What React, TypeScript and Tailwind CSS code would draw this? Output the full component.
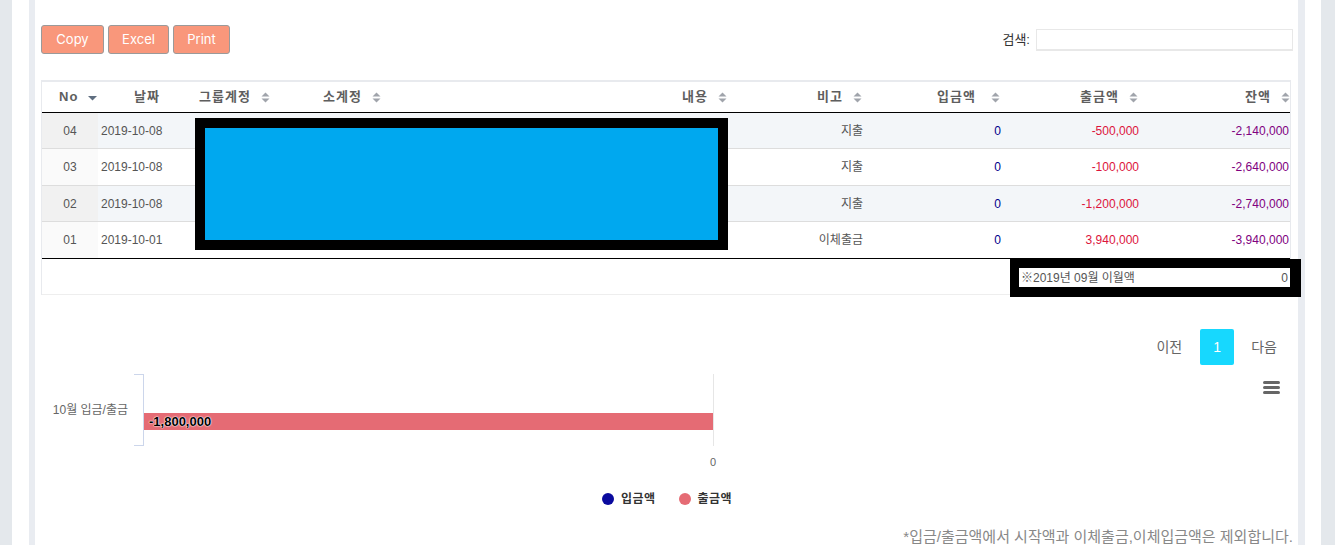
import React from 'react';

const cols = 'grid grid-cols-[56px_98px_124px_181px_230px_135px_138px_138px_150px]';

function SortIcon() {
  return (
    <svg width="9" height="11" viewBox="0 0 9 11" className="shrink-0">
      <path d="M4.5 0.5 L8.5 4.5 H0.5 Z" fill="#a0a4ab" />
      <path d="M4.5 10.5 L8.5 6.5 H0.5 Z" fill="#a0a4ab" />
    </svg>
  );
}

function SortDesc() {
  return (
    <svg width="9" height="5" viewBox="0 0 9 5" className="shrink-0 mt-[3px]">
      <path d="M0 0 H9 L4.5 4.5 Z" fill="#5f6e80" />
    </svg>
  );
}

const rows = [
  { no: '04', date: '2019-10-08', memo: '지출', inAmt: '0', out: '-500,000', bal: '-2,140,000', h: 'h-[36px]' },
  { no: '03', date: '2019-10-08', memo: '지출', inAmt: '0', out: '-100,000', bal: '-2,640,000', h: 'h-[37px]' },
  { no: '02', date: '2019-10-08', memo: '지출', inAmt: '0', out: '-1,200,000', bal: '-2,740,000', h: 'h-[36px]' },
  { no: '01', date: '2019-10-01', memo: '이체출금', inAmt: '0', out: '3,940,000', bal: '-3,940,000', h: 'h-[36px]' },
];

export default function App() {
  return (
    <div className="w-[1335px] h-[545px] overflow-hidden bg-[#e4e8ec] pl-[12px] pr-[14px] font-['Liberation_Sans','Noto_Sans_CJK_KR',sans-serif] text-[#555]">
      <div className="h-full bg-white pl-[17px] pr-[16px]">
        <div className="h-full bg-[#e9ecf1] pl-[6px] pr-[7px]">
          <div className="h-full bg-white pl-[6px] pr-[7px] pt-[25px]">
            {/* toolbar */}
            <div className="flex items-start justify-between">
              <div className="flex gap-[4px]">
                {[
                  ['Copy', 'w-[63px]'],
                  ['Excel', 'w-[61px]'],
                  ['Print', 'w-[57px]'],
                ].map(([t, w]) => (
                  <button
                    key={t}
                    className={`${w} h-[29px] rounded-[3px] border border-[#9a9a9a] bg-[#f9977b] text-white text-[13px] font-['Inter',sans-serif]`}
                  >
                    {t}
                  </button>
                ))}
              </div>
              <div className="flex items-center gap-[6px] mt-[4px] mr-[-2px]">
                <span className="text-[13px] text-[#333]">검색:</span>
                <input className="w-[257px] h-[22px] border border-[#e8e8e8] border-b-2 outline-none" />
              </div>
            </div>

            {/* table */}
            <div className="relative mt-[26px] border-t-2 border-x border-[#e8eaee]">
              <div className={`${cols} h-[31px] border-b border-black text-[13px] font-bold text-[#5e5e5e] tracking-[1px]`}>
                <div className="flex items-center pl-[17px] gap-[10px]">
                  <span>No</span>
                  <SortDesc />
                </div>
                <div className="flex items-center justify-center">날짜</div>
                <div className="flex items-center pl-[3px] gap-[10px]">
                  <span>그룹계정</span>
                  <SortIcon />
                </div>
                <div className="flex items-center pl-[3px] gap-[10px]">
                  <span>소계정</span>
                  <SortIcon />
                </div>
                <div className="flex items-center justify-end pr-[4px] gap-[10px]">
                  <span>내용</span>
                  <SortIcon />
                </div>
                <div className="flex items-center justify-end pr-[4px] gap-[10px]">
                  <span>비고</span>
                  <SortIcon />
                </div>
                <div className="flex items-center justify-end pr-[4px] gap-[15px]">
                  <span>입금액</span>
                  <SortIcon />
                </div>
                <div className="flex items-center justify-end pr-[4px] gap-[10px]">
                  <span>출금액</span>
                  <SortIcon />
                </div>
                <div className="flex items-center justify-end pr-[2px] gap-[10px]">
                  <span>잔액</span>
                  <SortIcon />
                </div>
              </div>

              <div className="relative border-b border-black">
                {rows.map((r, i) => {
                  const odd = i % 2 === 0;
                  return (
                    <div
                      key={r.no}
                      className={`${cols} ${r.h} text-[12px] ${i < 3 ? 'border-b border-[#dddddd]' : ''} ${odd ? 'bg-[#f3f6f9]' : 'bg-white'}`}
                    >
                      <div className={`flex items-center justify-center ${odd ? 'bg-[#f1f1f1]' : 'bg-[#fafafa]'}`}>{r.no}</div>
                      <div className="flex items-center pl-[3px]">{r.date}</div>
                      <div />
                      <div />
                      <div />
                      <div className="flex items-center justify-end pr-[3px]">{r.memo}</div>
                      <div className="flex items-center justify-end pr-[3px] text-[#00008b]">{r.inAmt}</div>
                      <div className="flex items-center justify-end pr-[3px] text-[#dc143c]">{r.out}</div>
                      <div className="flex items-center justify-end pr-[3px] text-[#800080]">{r.bal}</div>
                    </div>
                  );
                })}
                {/* redaction */}
                <div className="absolute left-[153px] top-[5px] w-[533px] h-[132px] border-[10px] border-black bg-[#00a8ef]" />
              </div>

              <div className="relative h-[36px] border-b border-[#eeeeee]">
                <div className="absolute left-[968px] top-0 w-[291px] h-[38px] border-black border-t-[9px] border-l-[9px] border-r-[11px] border-b-[10px] bg-white flex items-center justify-between px-[2px] text-[12px] text-[#555]">
                  <span>※2019년 09월 이월액</span>
                  <span>0</span>
                </div>
              </div>
            </div>

            {/* pagination */}
            <div className="mt-[34px] flex items-center justify-end pr-[14px] text-[14px] text-[#666]">
              <span>이전</span>
              <span className="ml-[18px] w-[34px] h-[36px] flex items-center justify-center bg-[#17d8fe] text-white rounded-[2px]">1</span>
              <span className="ml-[17px]">다음</span>
            </div>

            {/* chart */}
            <div className="relative mt-[9px]">
              <div className="absolute right-[11px] top-[7px] flex flex-col gap-[2px]">
                <span className="block w-[17px] h-[3px] rounded-full bg-[#666]" />
                <span className="block w-[17px] h-[3px] rounded-full bg-[#666]" />
                <span className="block w-[17px] h-[3px] rounded-full bg-[#666]" />
              </div>

              <div className="flex h-[72px]">
                <div className="w-[93px] flex items-center justify-end pr-[6px] text-[12px] text-[#666]">10월 입금/출금</div>
                <div className="w-[10px] border-y border-r border-[#ccd6eb]" />
                <div className="relative w-[570px] border-r border-[#e6e6e6]">
                  <div className="absolute left-0 right-0 top-[39px] h-[17px] bg-[#e56b74] flex items-center pl-[5px]">
                    <span className="text-[13px] font-bold text-black [text-shadow:0_0_1px_#fff,0_0_1px_#fff,0_0_2px_#fff]">-1,800,000</span>
                  </div>
                </div>
              </div>

              <div className="flex mt-[8px]">
                <div className="w-[675px] text-right text-[11px] text-[#666]">0</div>
              </div>

              <div className="mt-[19px] flex justify-center gap-[23px] pl-[2px] text-[12px] font-bold text-[#333] tracking-[0.5px]">
                <div className="flex items-center gap-[7px]">
                  <span className="w-[12px] h-[12px] rounded-full bg-[#0a0a9e]" />
                  <span>입금액</span>
                </div>
                <div className="flex items-center gap-[7px]">
                  <span className="w-[12px] h-[12px] rounded-full bg-[#e56b74]" />
                  <span>출금액</span>
                </div>
              </div>

              <div className="mt-[18px] text-right mr-[-2px] text-[15px] text-[#888]">
                *입금/출금액에서 시작액과 이체출금,이체입금액은 제외합니다.
              </div>
            </div>
          </div>
        </div>
      </div>
    </div>
  );
}
